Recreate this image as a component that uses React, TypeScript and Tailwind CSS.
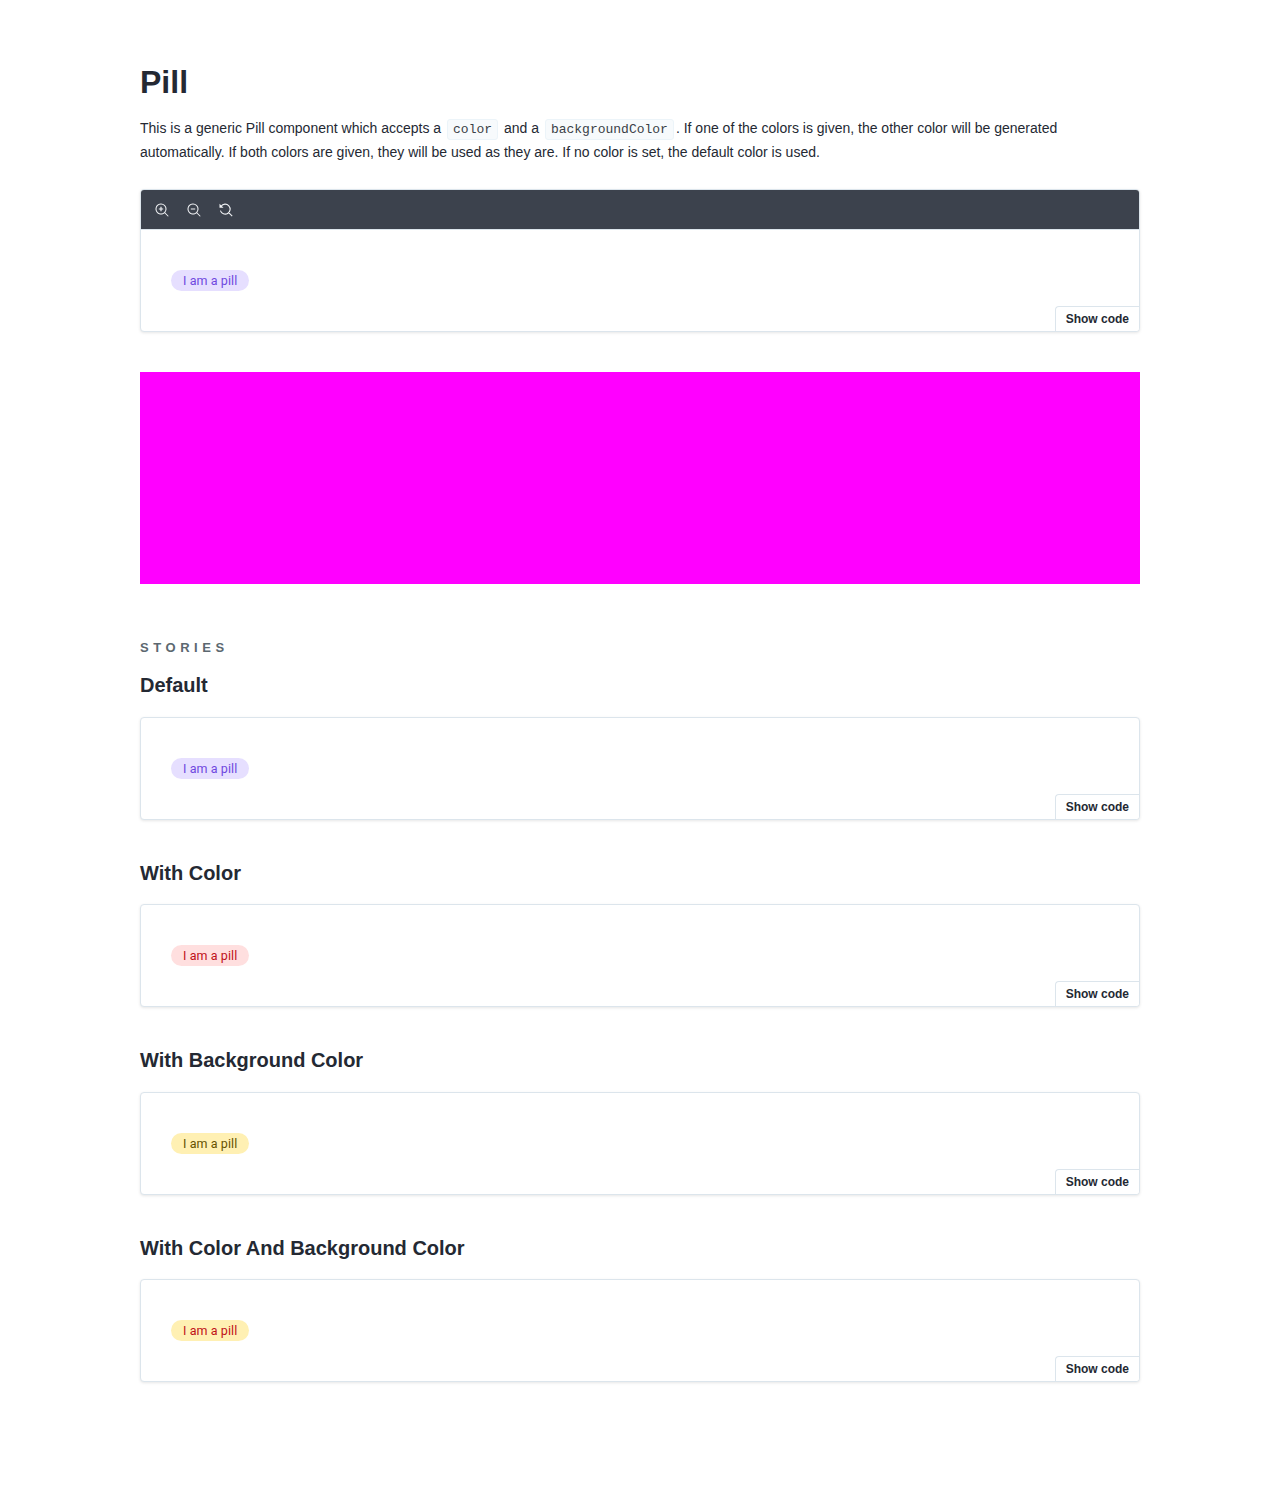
import React from 'react';

const lens = 'M9.544 10.206a5.5 5.5 0 11.662-.662.5.5 0 01.148.102l3 3a.5.5 0 01-.708.708l-3-3a.5.5 0 01-.102-.148zM10.5 6a4.5 4.5 0 11-9 0 4.5 4.5 0 019 0z';
const plus = 'M5.4 3.8h1.2v1.6h1.6v1.2H6.6v1.6H5.4V6.6H3.8V5.4h1.6z';
const minus = 'M3.8 5.4h4.4v1.2H3.8z';

function Svg({ children }: { children: React.ReactNode }) {
  return (
    <svg viewBox="0 0 14 14" className="size-3.5" fill="currentColor" fillRule="evenodd">
      {children}
    </svg>
  );
}

function Toolbar() {
  return (
    <div className="flex h-10 items-center gap-[18px] border-b border-[#dce5ec] bg-[#3c424d] bg-clip-padding pl-3.5 text-[#f0f2f5]">
      <Svg>
        <path d={lens} />
        <path d={plus} />
      </Svg>
      <Svg>
        <path d={lens} />
        <path d={minus} />
      </Svg>
      <Svg>
        <path d="M2.1 3.2a5 5 0 1 1-.7 4.5M9.7 9.7l3.5 3.5" fill="none" stroke="currentColor" strokeWidth="1.1" />
        <path d="M.5.8v4h4z" />
      </Svg>
    </div>
  );
}

function Preview({ pill, toolbar }: { pill: string; toolbar?: boolean }) {
  return (
    <div className="relative overflow-hidden rounded border border-[#dce5ec] bg-white shadow-[0_1px_3px_0_rgba(0,0,0,0.1)]">
      {toolbar && <Toolbar />}
      <div className="flex h-[101px] px-[30px] pt-10">
        <span
          className={`h-[21px] w-[78px] rounded-full pl-3 font-['Roboto',sans-serif] text-[12.5px] leading-[22px] tracking-[0.08px] whitespace-nowrap ${pill}`}
        >
          I am a pill
        </span>
      </div>
      <button className="absolute right-0 bottom-0 h-[25px] rounded-tl border-t border-l border-[#dce5ec] bg-white px-2.5 text-xs leading-6 font-bold">
        Show code
      </button>
    </div>
  );
}

function Code({ children }: { children: string }) {
  return (
    <code className="mx-0.5 inline-block rounded-[3px] border border-[#ecf4f9] bg-[#f7fafc] px-[5px] py-[3px] font-['Liberation_Mono',monospace] text-[13px] leading-[13px] whitespace-nowrap text-[#3a3f47]">
      {children}
    </code>
  );
}

const stories = [
  { title: 'Default', pill: 'bg-[#e6dfff] text-[#6f48e0]' },
  { title: 'With Color', pill: 'bg-[#ffdfdf] text-[#c01018]' },
  { title: 'With Background Color', pill: 'bg-[#fff0b3] text-[#665200]' },
  { title: 'With Color And Background Color', pill: 'bg-[#fff0b3] text-[#c01018]' },
];

export default function App() {
  return (
    <main className="min-h-[1486px] bg-white font-['Liberation_Sans',sans-serif] text-[#242933]">
      <div className="mx-auto w-[1000px] pt-16">
        <h1 className="text-[32px] leading-9 font-bold">Pill</h1>
        <p className="mt-4 text-sm leading-6">
          This is a generic Pill component which accepts a <Code>color</Code> and a <Code>backgroundColor</Code>. If one of the
          colors is given, the other color will be generated automatically. If both colors are given, they will be used as they
          are. If no color is set, the default color is used.
        </p>
        <div className="mt-[25px]">
          <Preview toolbar pill="bg-[#e6dfff] text-[#6f48e0]" />
        </div>
        <div className="mt-10 h-[212px] bg-[#ff00ff]" />
        <h2 className="mt-14 text-[13px] leading-4 font-bold tracking-[0.35em] text-[#5c6870]">STORIES</h2>
        {stories.map((s, i) => (
          <section key={s.title} className={i === 0 ? 'mt-[17.2px]' : 'mt-[40.8px]'}>
            <h3 className="text-xl leading-6 font-bold">{s.title}</h3>
            <div className="mt-[19.7px]">
              <Preview pill={s.pill} />
            </div>
          </section>
        ))}
      </div>
    </main>
  );
}
